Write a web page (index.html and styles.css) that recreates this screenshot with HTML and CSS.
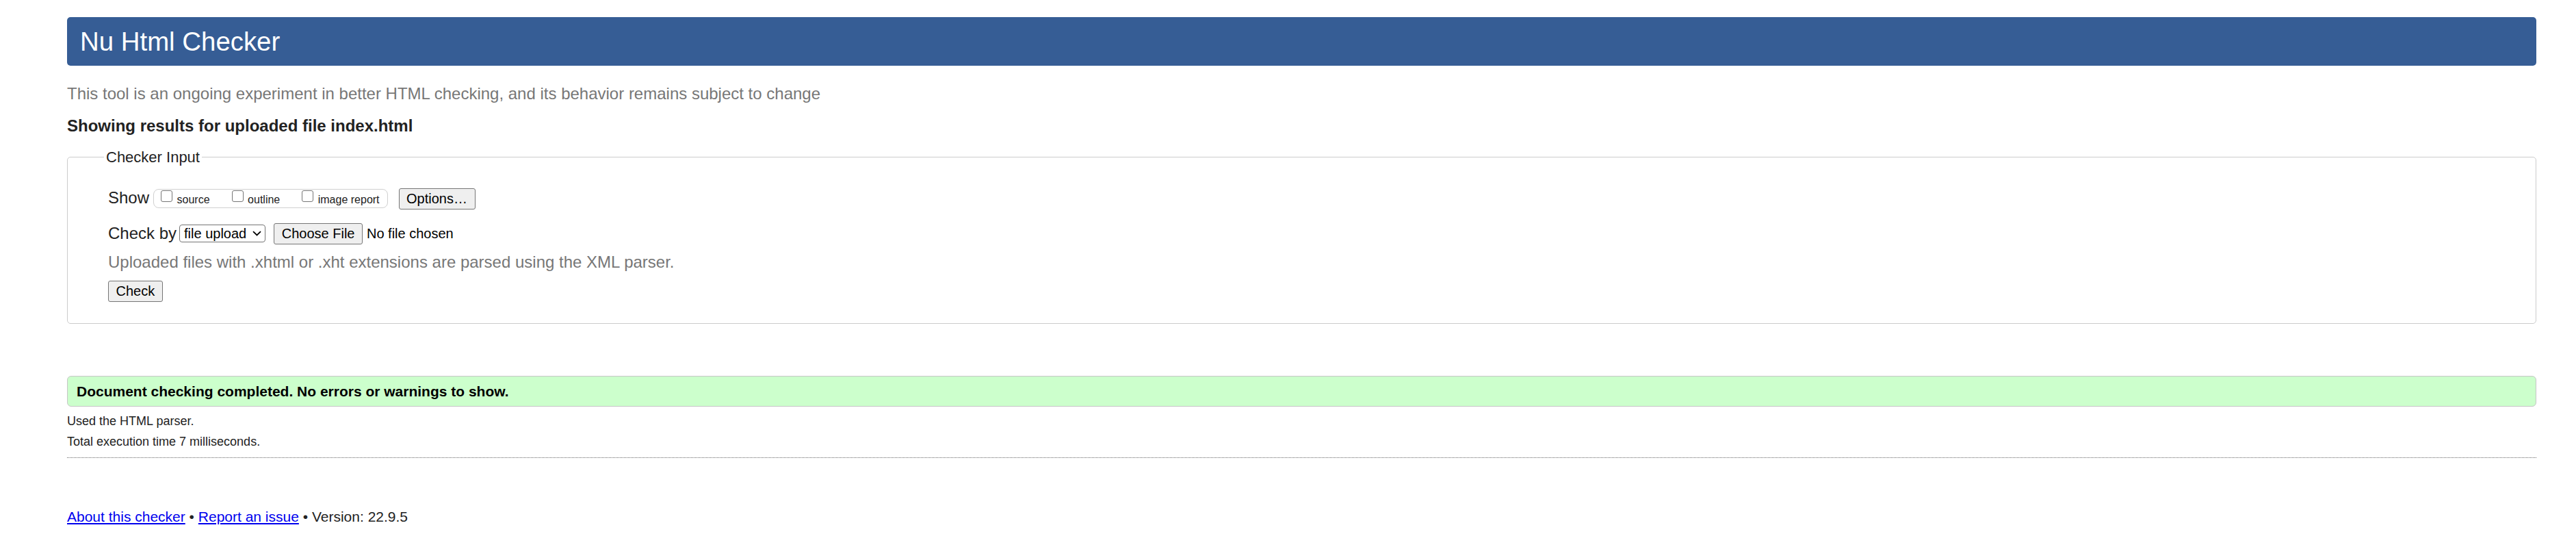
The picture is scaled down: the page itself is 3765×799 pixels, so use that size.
FILE: index.html
```html
<!DOCTYPE html>
<html lang="en">
<head>
<meta charset="utf-8">
<title>Nu Html Checker</title>
<link rel="stylesheet" href="styles.css">
</head>
<body>
<div class="page">
  <h1 class="title">Nu Html Checker</h1>
  <p class="intro">This tool is an ongoing experiment in better HTML checking, and its behavior remains subject to change</p>
  <p class="showing">Showing results for uploaded file index.html</p>
  <form class="checker">
    <fieldset class="input-set">
      <legend class="legend">Checker Input</legend>
      <div class="row row-show">
        <span class="row-label">Show</span>
        <span class="show-group">
          <label class="opt"><input type="checkbox" class="cb"><span class="opt-text">source</span></label>
          <label class="opt"><input type="checkbox" class="cb"><span class="opt-text">outline</span></label>
          <label class="opt"><input type="checkbox" class="cb"><span class="opt-text">image report</span></label>
        </span>
        <button type="button" class="btn btn-options">Options…</button>
      </div>
      <div class="row row-checkby">
        <span class="row-label label-checkby">Check by</span>
        <span class="select"><span class="select-text">file upload</span><svg class="chev" width="13" height="8" viewBox="0 0 13 8"><path d="M1 1.2 L6.5 6.5 L12 1.2" fill="none" stroke="#000" stroke-width="1.8"/></svg></span>
        <button type="button" class="btn btn-file">Choose File</button>
        <span class="file-status">No file chosen</span>
      </div>
      <p class="hint">Uploaded files with .xhtml or .xht extensions are parsed using the XML parser.</p>
      <div class="row row-submit"><button type="button" class="btn">Check</button></div>
    </fieldset>
  </form>
  <p class="success">Document checking completed. No errors or warnings to show.</p>
  <p class="meta meta-first">Used the HTML parser.</p>
  <p class="meta meta-second">Total execution time 7 milliseconds.</p>
  <hr class="divider">
  <p class="footer"><a href="#">About this checker</a> • <a href="#">Report an issue</a> • Version: 22.9.5</p>
</div>
</body>
</html>
```

FILE: styles.css
```css
* { box-sizing: border-box; }

body {
  margin: 0;
  background: #fff;
  font-family: "Liberation Sans", Arial, sans-serif;
  color: #222;
}

.page {
  padding: 25px 58px 0 98px;
}

.title {
  margin: 0;
  padding: 13.5px 19px;
  background: #365d95;
  color: #fff;
  font-size: 38.4px;
  line-height: 44px;
  font-weight: normal;
  border-radius: 5px;
}

.intro {
  margin: 27px 0 0;
  font-size: 24px;
  line-height: 28px;
  color: #777;
}

.showing {
  margin: 19px 0 0;
  font-size: 24px;
  line-height: 28px;
  font-weight: bold;
  color: #222;
}

.checker { margin: 0; }

.input-set {
  margin: 19px 0 0;
  padding: 33px 0 31px 59px;
  border: 1px solid #ccc;
  border-radius: 5px;
  min-width: 0;
}

.legend {
  font-size: 22px;
  line-height: 25px;
  padding: 0 3px;
  margin-left: -6px;
  color: #222;
}

.row {
  display: flex;
  align-items: flex-start;
  height: 31px;
}

.row-label {
  font-size: 24px;
  line-height: 28px;
  color: #222;
}

.show-group {
  display: flex;
  align-items: flex-start;
  height: 28px;
  margin: 1px 0 0 6px;
  padding: 0 11px 0 10px;
  border: 1px solid #d0d0d0;
  border-radius: 8px;
}

.opt {
  display: flex;
  align-items: flex-start;
}

.opt + .opt { margin-left: 32px; }

.cb {
  appearance: none;
  -webkit-appearance: none;
  width: 17px;
  height: 17px;
  margin: 1.4px 6.5px 0 0;
  border: 1px solid #767676;
  border-radius: 3px;
  background: #fff;
}

.opt-text {
  font-size: 16px;
  line-height: 18px;
  margin-top: 5.7px;
  color: #222;
}

.btn {
  height: 31px;
  padding: 3px 10.5px;
  border: 1px solid #767676;
  border-radius: 3px;
  background: #efefef;
  font-family: "Liberation Sans", Arial, sans-serif;
  font-size: 20px;
  line-height: 23px;
  color: #000;
}

.btn-options { margin-left: 16px; }

.row-checkby { margin-top: 20px; }

.label-checkby { margin-top: 1px; }

.select {
  display: flex;
  align-items: center;
  gap: 9px;
  height: 26px;
  margin: 2.4px 0 0 4px;
  padding: 0 5px 0 6px;
  border: 1px solid #767676;
  border-radius: 4px;
  background: #fff;
  font-size: 20px;
  line-height: 23px;
  color: #000;
}

.chev { display: block; }

.btn-file { margin-left: 12px; }

.file-status {
  margin: 4px 0 0 6px;
  font-size: 20px;
  line-height: 23px;
  color: #000;
}

.hint {
  margin: 11.8px 0 0;
  font-size: 24px;
  line-height: 28px;
  color: #777;
}

.row-submit { margin-top: 13.2px; }

.success {
  margin: 76px 0 0;
  padding: 10px 13px 9px;
  border: 1px solid #c6c6c6;
  border-radius: 6px;
  background: #ccffcc;
  font-size: 21px;
  line-height: 24px;
  font-weight: bold;
  color: #000;
}

.meta {
  font-size: 18px;
  line-height: 20px;
  color: #222;
}

.meta-first { margin: 11.5px 0 0; }
.meta-second { margin: 10px 0 0; }

.divider {
  margin: 12.25px 0 0;
  height: 0;
  border: 0;
  border-top: 1px dotted #666;
}

.footer {
  margin: 74.75px 0 0;
  font-size: 21px;
  line-height: 24px;
  color: #222;
}

.footer a {
  color: #00e;
  text-decoration: underline;
}
```
